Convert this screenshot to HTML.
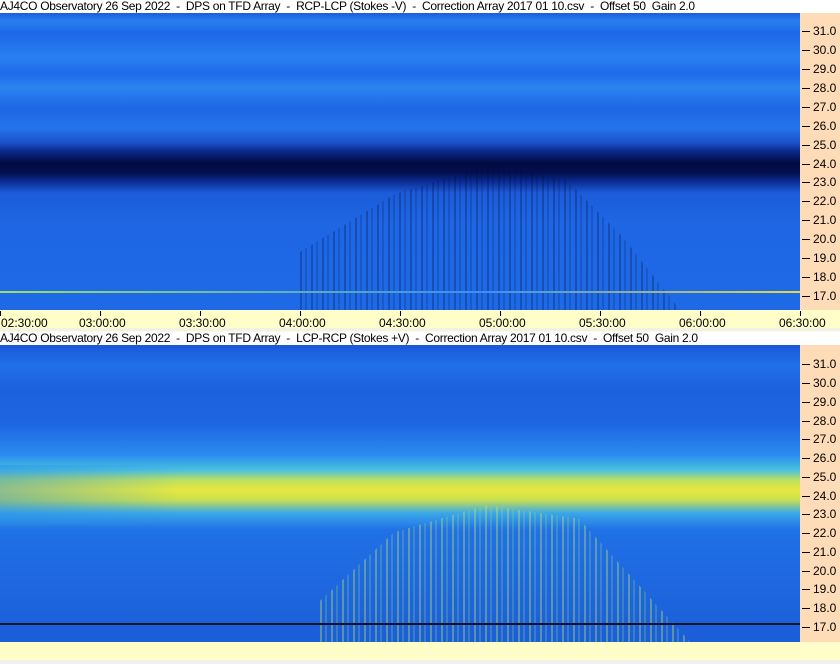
<!DOCTYPE html>
<html><head><style>
*{margin:0;padding:0}
body{width:840px;height:664px;position:relative;background:#fffec8;font-family:"Liberation Sans",sans-serif;overflow:hidden}
.t{position:absolute;left:0;width:840px;height:13px;background:#fff;font-size:12px;line-height:13px;color:#000;white-space:nowrap;letter-spacing:-0.3px}
.sp{position:absolute;left:0;width:800px}
.ax{position:absolute;left:800px;width:40px;background:#ffdcb8}
.tk{position:absolute;left:802px;font-size:12px;line-height:12px}
.tk:before{content:"";position:absolute;left:0;top:6px;width:8px;height:1px;background:#000}
.tk span{position:absolute;left:11px;top:0}
.tm{position:absolute;font-size:12px;top:316px}
.tl{position:absolute;top:311px;width:1px;height:5px;background:#000}
</style></head><body>
<div class="t" style="top:0">AJ4CO Observatory 26 Sep 2022 &nbsp;- &nbsp;DPS on TFD Array &nbsp;- &nbsp;RCP-LCP (Stokes -V) &nbsp;- &nbsp;Correction Array 2017 01 10.csv &nbsp;- &nbsp;Offset 50 &nbsp;Gain 2.0</div>
<div class="sp" style="top:13px;height:297px;background:linear-gradient(#1a5ee0 0,#2a7ef0 8px,#1e68e6 20px,#2a80f0 45px,#1e6ae8 60px,#2c84f2 75px,#1e66e4 95px,#2474ec 115px,#1a50c8 130px,#0a2a8a 138px,#020a40 150px,#03104e 160px,#0a2a90 168px,#1c5cd8 180px,#1e66e4 210px,#1e6ae6 297px)"></div>
<div class="sp" style="top:165px;height:145px;left:300px;width:380px;background:repeating-linear-gradient(90deg,rgba(0,10,60,.28) 0 2px,rgba(0,0,0,0) 2px 5px,rgba(0,10,60,.18) 5px 7px,rgba(0,0,0,0) 7px 11px);clip-path:polygon(0 60%,25% 20%,50% 0,70% 10%,85% 50%,100% 100%,0 100%)"></div>
<div class="sp" style="top:291px;height:2px;background:linear-gradient(90deg,#9de060,#3c8ef0 60%,#e8d840)"></div>
<div class="ax" style="top:13px;height:297px"></div>
<div class="ax" style="top:345px;height:297px"></div>
<div style="position:absolute;top:328px;left:0;width:840px;height:3px;background:#f0f0f0"></div>
<div class="t" style="top:332px">AJ4CO Observatory 26 Sep 2022 &nbsp;- &nbsp;DPS on TFD Array &nbsp;- &nbsp;LCP-RCP (Stokes +V) &nbsp;- &nbsp;Correction Array 2017 01 10.csv &nbsp;- &nbsp;Offset 50 &nbsp;Gain 2.0</div>
<div class="sp" style="top:345px;height:297px;background:linear-gradient(#1a58d8 0,#2070e8 20px,#1c60dc 45px,#1e66e2 80px,#2a8cf0 110px,#4ac0e0 125px,#bce060 135px,#e8e840 145px,#c8e050 155px,#3aa8e8 168px,#2070e6 185px,#1a5ed8 297px)"></div>
<div class="sp" style="top:465px;height:60px;width:180px;background:linear-gradient(90deg,rgba(40,140,230,.45),rgba(40,140,230,0))"></div>
<div class="sp" style="top:505px;height:137px;left:320px;width:370px;background:repeating-linear-gradient(90deg,rgba(200,230,90,.38) 0 2px,rgba(0,0,0,0) 2px 5px,rgba(150,220,120,.25) 5px 7px,rgba(0,0,0,0) 7px 11px);clip-path:polygon(0 70%,20% 20%,45% 0,70% 10%,85% 55%,100% 100%,0 100%)"></div>
<div class="sp" style="top:623px;height:2px;background:#041030"></div>
<div style="position:absolute;top:660px;left:0;width:840px;height:4px;background:#f0f0f0"></div>
<div class="tk" style="top:25px"><span>31.0</span></div>
<div class="tk" style="top:44px"><span>30.0</span></div>
<div class="tk" style="top:63px"><span>29.0</span></div>
<div class="tk" style="top:82px"><span>28.0</span></div>
<div class="tk" style="top:101px"><span>27.0</span></div>
<div class="tk" style="top:120px"><span>26.0</span></div>
<div class="tk" style="top:139px"><span>25.0</span></div>
<div class="tk" style="top:158px"><span>24.0</span></div>
<div class="tk" style="top:176px"><span>23.0</span></div>
<div class="tk" style="top:195px"><span>22.0</span></div>
<div class="tk" style="top:214px"><span>21.0</span></div>
<div class="tk" style="top:233px"><span>20.0</span></div>
<div class="tk" style="top:252px"><span>19.0</span></div>
<div class="tk" style="top:271px"><span>18.0</span></div>
<div class="tk" style="top:290px"><span>17.0</span></div>
<div class="tk" style="top:358px"><span>31.0</span></div>
<div class="tk" style="top:377px"><span>30.0</span></div>
<div class="tk" style="top:396px"><span>29.0</span></div>
<div class="tk" style="top:415px"><span>28.0</span></div>
<div class="tk" style="top:433px"><span>27.0</span></div>
<div class="tk" style="top:452px"><span>26.0</span></div>
<div class="tk" style="top:471px"><span>25.0</span></div>
<div class="tk" style="top:490px"><span>24.0</span></div>
<div class="tk" style="top:508px"><span>23.0</span></div>
<div class="tk" style="top:527px"><span>22.0</span></div>
<div class="tk" style="top:546px"><span>21.0</span></div>
<div class="tk" style="top:565px"><span>20.0</span></div>
<div class="tk" style="top:583px"><span>19.0</span></div>
<div class="tk" style="top:602px"><span>18.0</span></div>
<div class="tk" style="top:621px"><span>17.0</span></div>
<div class="tl" style="left:0"></div><div class="tm" style="left:1px">02:30:00</div>
<div class="tl" style="left:100px"></div><div class="tm" style="left:79px">03:00:00</div>
<div class="tl" style="left:200px"></div><div class="tm" style="left:179px">03:30:00</div>
<div class="tl" style="left:300px"></div><div class="tm" style="left:279px">04:00:00</div>
<div class="tl" style="left:400px"></div><div class="tm" style="left:379px">04:30:00</div>
<div class="tl" style="left:500px"></div><div class="tm" style="left:479px">05:00:00</div>
<div class="tl" style="left:600px"></div><div class="tm" style="left:579px">05:30:00</div>
<div class="tl" style="left:700px"></div><div class="tm" style="left:679px">06:00:00</div>
<div class="tl" style="left:800px"></div><div class="tm" style="left:779px">06:30:00</div>
</body></html>
